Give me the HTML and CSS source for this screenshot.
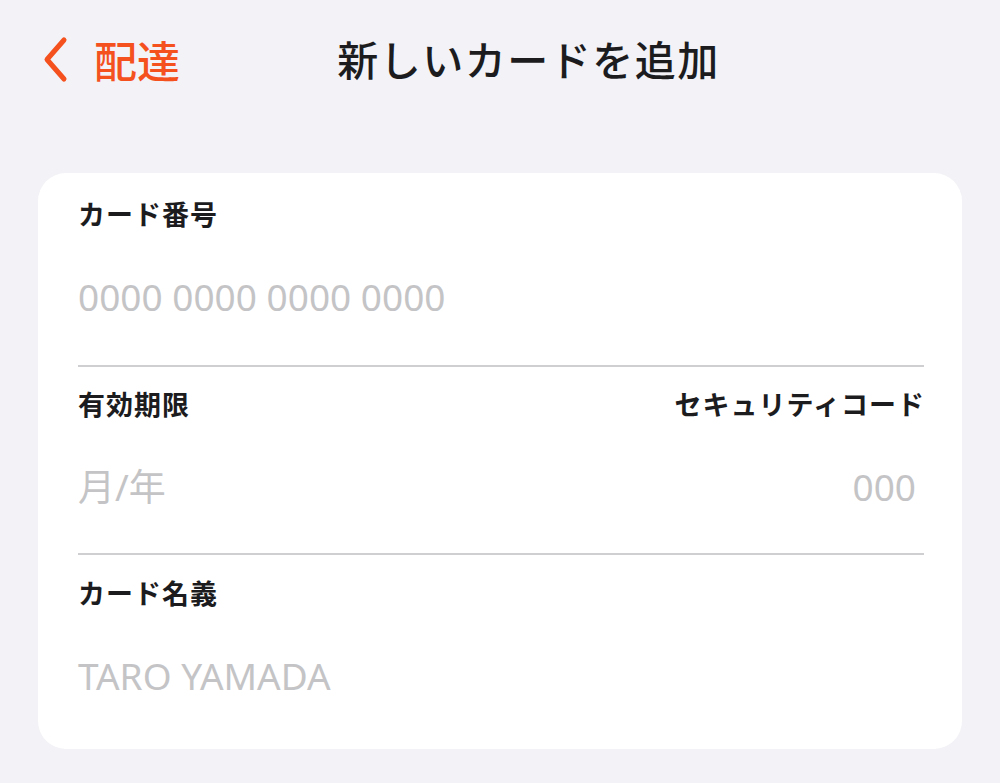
FILE: index.html
```html
<!DOCTYPE html>
<html lang="ja">
<head>
<meta charset="utf-8">
<title>新しいカードを追加</title>
<link rel="stylesheet" href="styles.css">
</head>
<body>
<div class="screen">
  <header class="nav">
    <a class="back" href="#">
      <svg class="chev" width="30" height="48" viewBox="0 0 30 48" aria-hidden="true">
        <path d="M24 5 L7 24.5 L24 44" fill="none" stroke="currentColor" stroke-width="5" stroke-linecap="round" stroke-linejoin="round"/>
      </svg>
      <span class="back-label">配達</span>
    </a>
    <h1 class="title">新しいカードを追加</h1>
  </header>

  <form class="card">
    <div class="field first">
      <label class="label">カード番号</label>
      <div class="ph">0000 0000 0000 0000</div>
    </div>
    <div class="field split">
      <div class="col">
        <label class="label">有効期限</label>
        <div class="ph">月/年</div>
      </div>
      <div class="col right">
        <label class="label">セキュリティコード</label>
        <div class="ph">000</div>
      </div>
    </div>
    <div class="field last">
      <label class="label">カード名義</label>
      <div class="ph">TARO YAMADA</div>
    </div>
  </form>
</div>
</body>
</html>
```
FILE: styles.css
```css
* { box-sizing: border-box; }
html, body {
  margin: 0;
  padding: 0;
  background: #f2f2f7;
}
body {
  font-family: "Noto Sans", "Noto Sans CJK JP", sans-serif;
  color: #1c1c1e;
  width: 1000px;
  height: 783px;
  overflow: hidden;
}
.screen {
  padding: 0 38px;
}
.nav {
  position: relative;
  height: 120px;
  display: flex;
  align-items: center;
  justify-content: center;
  padding-bottom: 2px;
}
.back {
  position: absolute;
  left: 2px;
  top: 34px;
  display: flex;
  align-items: center;
  gap: 24px;
  color: #f4511e;
  text-decoration: none;
}
.chev { display: block; }
.back-label {
  font-family: "Noto Sans CJK JP", sans-serif;
  font-size: 43px;
  font-weight: 500;
  line-height: 50px;
}
.title {
  margin: 0 0 2px 57px;
  font-family: "Noto Sans CJK JP", sans-serif;
  font-size: 41px;
  font-weight: 500;
  line-height: 50px;
  letter-spacing: 1.5px;
  color: #1c1c1e;
}
.card {
  margin: 53px 0 0;
  background: #ffffff;
  border-radius: 28px;
  padding: 3px 38px 49px 40px;
}
.field {
  padding: 21px 0 42px;
  border-bottom: 2px solid #cfcfd1;
}
.field.first {
  padding: 22px 0 44px;
}
.field.last {
  border-bottom: none;
  padding: 22px 0 0;
}
.split {
  display: flex;
  justify-content: space-between;
}
.col { display: flex; flex-direction: column; }
.col.right { align-items: flex-end; padding-right: 8px; }
.col.right .label { margin-right: -9px; }
.label {
  display: block;
  font-family: "Noto Sans CJK JP", sans-serif;
  font-size: 27px;
  font-weight: 700;
  line-height: 32px;
  color: #1c1c1e;
  letter-spacing: 1px;
}
.ph {
  margin-top: 43px;
  font-family: "Noto Sans", "Noto Sans CJK JP", sans-serif;
  font-size: 37px;
  line-height: 48px;
  color: #c4c4c6;
}
```
